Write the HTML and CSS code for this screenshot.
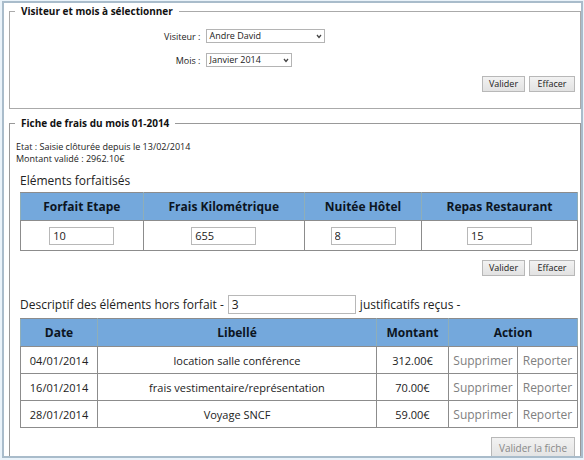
FILE: index.html
```html
<!DOCTYPE html>
<html lang="fr">
<head>
<meta charset="utf-8">
<title>Validation des fiches de frais</title>
<link rel="stylesheet" href="styles.css">
</head>
<body>
<main class="panel">
  <form>
    <fieldset class="group">
      <legend>Visiteur et mois à sélectionner</legend>
      <div class="fields">
        <label for="visiteur">Visiteur :</label>
        <span class="pick pick-wide"><select id="visiteur"><option>Andre David</option></select><svg viewBox="0 0 6 5" aria-hidden="true"><path d="M1 1l2 2.4L5 1"/></svg></span>
        <label for="mois">Mois :</label>
        <span class="pick"><select id="mois"><option>Janvier 2014</option></select><svg viewBox="0 0 6 5" aria-hidden="true"><path d="M1 1l2 2.4L5 1"/></svg></span>
      </div>
      <div class="actions">
        <button class="btn" type="submit">Valider</button>
        <button class="btn btn-clear" type="reset">Effacer</button>
      </div>
    </fieldset>
  </form>
  <form>
    <fieldset class="group sheet">
      <legend>Fiche de frais du mois 01-2014</legend>
      <p class="status">Etat : Saisie clôturée depuis le 13/02/2014<br>Montant validé : 2962.10€</p>
      <div class="section">
        <table class="grid flat">
          <caption>Eléments forfaitisés</caption>
          <colgroup><col class="c-step"><col class="c-km"><col class="c-night"><col class="c-meal"></colgroup>
          <thead>
            <tr><th>Forfait Etape</th><th>Frais Kilométrique</th><th>Nuitée Hôtel</th><th>Repas Restaurant</th></tr>
          </thead>
          <tbody>
            <tr>
              <td><input type="text" value="10" aria-label="Forfait Etape"></td>
              <td><input type="text" value="655" aria-label="Frais Kilométrique"></td>
              <td><input type="text" value="8" aria-label="Nuitée Hôtel"></td>
              <td><input type="text" value="15" aria-label="Repas Restaurant"></td>
            </tr>
          </tbody>
        </table>
      </div>
      <div class="actions">
        <button class="btn" type="submit">Valider</button>
        <button class="btn btn-clear" type="reset">Effacer</button>
      </div>
      <div class="section extras">
        <div class="receipts">
          <label for="justificatifs">Descriptif des éléments hors forfait -</label>
          <input type="text" id="justificatifs" value="3">
          <span>justificatifs reçus -</span>
        </div>
        <table class="grid">
          <colgroup><col class="c-date"><col><col class="c-amount"><col class="c-delete"><col class="c-defer"></colgroup>
          <thead>
            <tr><th>Date</th><th>Libellé</th><th>Montant</th><th colspan="2">Action</th></tr>
          </thead>
          <tbody>
            <tr><td>04/01/2014</td><td>location salle conférence</td><td>312.00€</td><td><a href="#">Supprimer</a></td><td><a href="#">Reporter</a></td></tr>
            <tr><td>16/01/2014</td><td>frais vestimentaire/représentation</td><td>70.00€</td><td><a href="#">Supprimer</a></td><td><a href="#">Reporter</a></td></tr>
            <tr><td>28/01/2014</td><td>Voyage SNCF</td><td>59.00€</td><td><a href="#">Supprimer</a></td><td><a href="#">Reporter</a></td></tr>
          </tbody>
        </table>
      </div>
      <div class="actions">
        <button class="btn btn-large" type="submit" disabled>Valider la fiche</button>
      </div>
    </fieldset>
  </form>
</main>
</body>
</html>
```
FILE: styles.css
```css
* {
  box-sizing: border-box;
}

body {
  margin: 0;
  padding: 1px 1px 2px 2px;
  height: 100vh;
  background: #eaf3fa;
  color: #222;
  font-family: "Trebuchet MS", "Open Sans", sans-serif;
  font-size: 12px;
}

.panel {
  height: 100%;
  overflow: hidden;
  border: 2px solid #a9bccb;
  background: #fff;
  padding: 0 0 0 5px;
}

.group {
  margin: 0 0 6px;
  padding: 0 5px 9px 6px;
  border: 1px solid #aaa;
  min-width: 0;
}

legend {
  margin-left: -1px;
  padding: 0 6px;
  font-size: 10px;
  line-height: 16px;
  font-weight: bold;
  color: #111;
}

.fields {
  display: grid;
  grid-template-columns: 33% 1fr;
  gap: 10px 6px;
  align-items: center;
  padding-top: 10px;
  font-size: 9px;
}

.fields label {
  text-align: right;
}

.pick {
  position: relative;
  width: 86px;
  height: 14px;
}

.pick-wide {
  width: 119px;
}

.pick select {
  display: block;
  appearance: none;
  width: 100%;
  height: 100%;
  padding: 0 2px;
  border: 1px solid #b4b4b4;
  border-radius: 0;
  background: #fff;
  color: #222;
  font: inherit;
  line-height: 12px;
}

.pick svg {
  position: absolute;
  right: 3px;
  top: 5px;
  width: 6px;
  height: 5px;
  fill: none;
  stroke: #444;
  stroke-width: 1.3;
  pointer-events: none;
}

.actions {
  display: flex;
  justify-content: flex-end;
  gap: 4px;
  padding: 9px 0 7px;
}

.btn {
  width: 43px;
  height: 16px;
  padding: 0;
  border: 1px solid #b8b8b8;
  background: linear-gradient(#f2f2f2, #e2e2e2);
  color: #222;
  font: inherit;
  font-size: 9px;
  line-height: 14px;
}

.btn-clear {
  width: 46px;
}

.btn-large {
  width: 84px;
  height: 22px;
  font-size: 10px;
}

.btn:disabled {
  color: #888;
}

.sheet {
  border-color: #999;
}

.status {
  margin: 10px 0 7px;
  font-size: 9px;
  line-height: 12px;
}

.section {
  margin: 0 -3px 0 4px;
}

.grid {
  width: 100%;
  border-collapse: collapse;
  table-layout: fixed;
}

caption {
  padding-bottom: 2px;
  text-align: left;
  line-height: 18px;
}

th,
td {
  padding: 0;
  border: 1px solid #8c8c8c;
  text-align: center;
  white-space: nowrap;
}

th {
  height: 28px;
  background: #74a8dc;
  border-left-color: #8faeb8;
  border-right-color: #8faeb8;
  color: #0c1522;
  font-size: 12px;
}

td {
  height: 27px;
  font-size: 11px;
}

.flat td {
  height: 30px;
}

.c-step { width: 22%; }
.c-km { width: 29%; }
.c-night { width: 21%; }
.c-date { width: 77px; }
.c-amount { width: 72px; }
.c-delete { width: 69px; }
.c-defer { width: 60px; }

input {
  width: 65px;
  height: 18px;
  padding: 0 3px;
  border: 1px solid #b8b8b8;
  background: #fff;
  color: #222;
  font: inherit;
}

a {
  color: #808080;
  font-size: 12px;
  text-decoration: none;
}

.extras {
  margin-top: 12px;
}

.receipts {
  display: flex;
  align-items: center;
  gap: 4px;
  padding-bottom: 4px;
}

.receipts input {
  width: 128px;
  height: 19px;
}
```
